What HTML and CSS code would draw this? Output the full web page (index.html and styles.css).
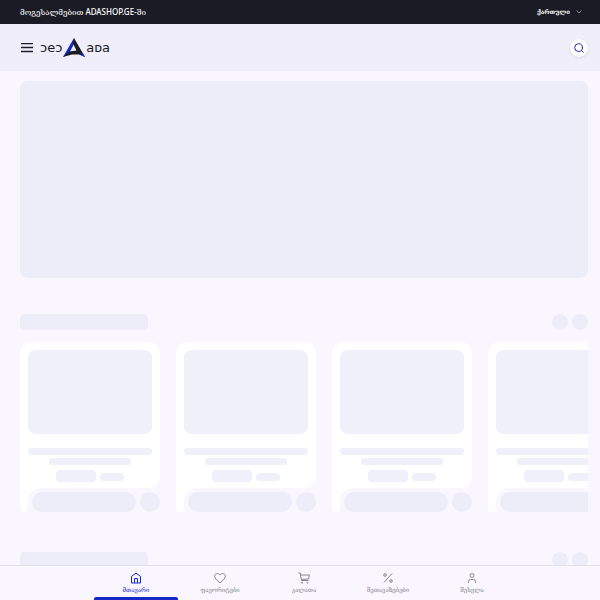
FILE: index.html
```html
<!DOCTYPE html>
<html lang="ka">

<head>
    <meta charset="UTF-8">
    <meta name="viewport" content="width=device-width, initial-scale=1">
    <title>ADASHOP.GE</title>
    <link rel="stylesheet" href="styles.css">
</head>

<body>
    <div class="topbar">
        <p class="welcome">მოგესალმებით ADASHOP.GE-ში</p>
        <button class="language" type="button">
            ქართული
            <svg width="6" height="4" viewBox="0 0 6 4" fill="none" stroke="#8d8d96"><path d="M0.5 0.5 3 3 5.5 0.5"/></svg>
        </button>
    </div>

    <header class="header">
        <button class="menu-btn" type="button" aria-label="მენიუ">
            <svg width="14" height="10" viewBox="0 0 14 10" stroke="#1b1b25" stroke-width="1.4"><path d="M1 .5h12M1 4.500h12M1 8.500h12"/></svg>
        </button>
        <a class="logo" href="#">
            <span>ɔeɔ</span>
            <svg width="22" height="19" viewBox="0 0 22 19">
                <path fill="#1428c8" d="M11 0 0 19 5.500 16.500 12 4z"/>
                <path fill="#1b1b25" d="M11 0 22 19 16 16.500 9 16.500 0 19 6.500 13.500 13.500 12.500 10 5.500z"/>
                <path fill="#1428c8" d="M16 16 22 19 20 15.500z"/>
            </svg>
            <span>aᴅa</span>
        </a>
        <button class="search-btn" type="button" aria-label="ძებნა">
            <svg width="10" height="10" viewBox="0 0 10 10" fill="none" stroke="#1c2bb8" stroke-linecap="round"><circle cx="4.600" cy="4.600" r="3.900"/><path d="m7.500 7.500 1.800 1.800"/></svg>
        </button>
    </header>

    <main class="content">
        <div class="banner"></div>

        <section class="products">
            <div class="section-head">
                <div class="section-title"></div>
                <div class="round"></div>
                <div class="round"></div>
            </div>
            <div class="slider">
                <div class="card">
                    <div class="card-body">
                        <div class="photo"></div>
                        <div class="line"></div>
                        <div class="line short"></div>
                        <div class="prices"><div class="price"></div><div class="old-price"></div></div>
                    </div>
                    <div class="card-foot"><div class="actions"><div class="buy"></div><div class="like"></div></div></div>
                </div>
                <div class="card">
                    <div class="card-body">
                        <div class="photo"></div>
                        <div class="line"></div>
                        <div class="line short"></div>
                        <div class="prices"><div class="price"></div><div class="old-price"></div></div>
                    </div>
                    <div class="card-foot"><div class="actions"><div class="buy"></div><div class="like"></div></div></div>
                </div>
                <div class="card">
                    <div class="card-body">
                        <div class="photo"></div>
                        <div class="line"></div>
                        <div class="line short"></div>
                        <div class="prices"><div class="price"></div><div class="old-price"></div></div>
                    </div>
                    <div class="card-foot"><div class="actions"><div class="buy"></div><div class="like"></div></div></div>
                </div>
                <div class="card">
                    <div class="card-body">
                        <div class="photo"></div>
                        <div class="line"></div>
                        <div class="line short"></div>
                        <div class="prices"><div class="price"></div><div class="old-price"></div></div>
                    </div>
                    <div class="card-foot"><div class="actions"><div class="buy"></div><div class="like"></div></div></div>
                </div>
            </div>
        </section>

        <section class="products">
            <div class="section-head">
                <div class="section-title"></div>
                <div class="round"></div>
                <div class="round"></div>
            </div>
        </section>
    </main>

    <nav class="bottom-nav">
        <a class="nav-item active" href="#">
            <svg width="12" height="12" viewBox="0 0 12 12"><path d="M1.500 4.500 6 1l4.500 3.500V11h-9zM4.500 11V6.500h3V11"/></svg>
            მთავარი
        </a>
        <a class="nav-item" href="#">
            <svg width="12" height="12" viewBox="0 0 12 12"><path d="M6 10.800C3 8.500.700 6.500.700 4.200.700 1.400 4.300.600 6 3c1.700-2.400 5.300-1.600 5.300 1.200C11.300 6.500 9 8.500 6 10.800z"/></svg>
            ფავორიტები
        </a>
        <a class="nav-item" href="#">
            <svg width="12" height="12" viewBox="0 0 12 12"><path d="M.500 1h1.700l1.300 7.500h7M2.500 3h9l-1 4-7.200.500"/><circle cx="4" cy="10.800" r=".5"/><circle cx="9.500" cy="10.800" r=".5"/></svg>
            კალათა
        </a>
        <a class="nav-item" href="#">
            <svg width="12" height="12" viewBox="0 0 12 12"><path d="m2 10.500 8-9"/><circle cx="3" cy="3" r="1.300"/><circle cx="9" cy="9" r="1.300"/></svg>
            შეთავაზებები
        </a>
        <a class="nav-item" href="#">
            <svg width="12" height="12" viewBox="0 0 12 12"><circle cx="6" cy="3.500" r="2"/><path d="M2.500 11V9.500a2 2 0 0 1 2-2h3a2 2 0 0 1 2 2V11"/></svg>
            შესვლა
        </a>
    </nav>
</body>

</html>
```
FILE: styles.css
```css
* {
    box-sizing: border-box;
}

body {
    margin: 0;
    height: 100vh;
    display: flex;
    flex-direction: column;
    overflow: hidden;
    background: #f9f6ff;
    color: #1b1b25;
    font-family: "Noto Sans", "DejaVu Serif", serif;
}

button {
    border: 0;
    padding: 0;
    background: none;
    font-family: inherit;
    cursor: pointer;
}

a {
    color: inherit;
    text-decoration: none;
}

svg {
    display: block;
}

.topbar,
.header {
    display: flex;
    align-items: center;
    justify-content: space-between;
    flex-shrink: 0;
    padding: 0 12px 0 20px;
}

.topbar {
    height: 24px;
    background: #1b1b25;
    color: #fff;
}

.welcome {
    margin: 0;
    font-size: 8px;
    font-weight: 500;
    line-height: 12px;
}

.language {
    display: flex;
    align-items: center;
    gap: 6px;
    padding-right: 6px;
    color: #fff;
    font-size: 6px;
    font-weight: 700;
    line-height: 12px;
}

.header {
    height: 47px;
    background: #f0eefb;
}

.menu-btn {
    margin-right: 6px;
}

.logo {
    display: flex;
    align-items: center;
    gap: 1px;
    margin-right: auto;
    font-family: "DejaVu Sans", sans-serif;
    font-size: 13px;
    line-height: 18px;
}

.search-btn {
    display: flex;
    align-items: center;
    justify-content: center;
    width: 18px;
    height: 18px;
    border-radius: 50%;
    background: #fff;
    box-shadow: 0 1px 3px rgba(0, 0, 0, 0.1);
}

.content {
    flex: 1;
    min-height: 0;
    overflow: hidden;
    padding: 10px 12px 0 20px;
}

.banner {
    height: 197px;
    margin-bottom: 36px;
    border-radius: 8px;
    background: #ecedf8;
}

.products {
    margin-bottom: 40px;
}

.section-head {
    display: flex;
    gap: 4px;
    margin-bottom: 12px;
}

.section-title {
    width: 128px;
    height: 16px;
    margin-right: auto;
    border-radius: 4px;
    background: #ecedf8;
}

.round {
    width: 16px;
    height: 16px;
    border-radius: 50%;
    background: #ecedf8;
}

.slider {
    display: flex;
    gap: 16px;
    overflow: hidden;
}

.card {
    flex: 0 0 140px;
}

.card-body {
    display: flex;
    flex-direction: column;
    align-items: center;
    padding: 8px 8px 6px;
    border-radius: 12px 12px 12px 0;
    background: #fff;
}

.photo {
    width: 100%;
    height: 84px;
    margin-bottom: 14px;
    border-radius: 8px;
    background: #eff0f9;
}

.line {
    width: 100%;
    height: 7px;
    margin-bottom: 3px;
    border-radius: 4px;
    background: #eff0f9;
}

.short {
    width: 82px;
}

.prices {
    display: flex;
    align-items: center;
    gap: 4px;
    padding-top: 2px;
}

.price {
    width: 40px;
    height: 12px;
    border-radius: 4px;
    background: #eff0f9;
}

.old-price {
    width: 24px;
    height: 8px;
    margin-top: 2px;
    border-radius: 4px;
    background: #eff0f9;
}

.card-foot {
    display: flex;
}

/* white tail under the card body */
.card-foot::before {
    content: "";
    width: 8px;
    border-radius: 0 0 4px 4px;
    background: #fff;
}

/* the gradient draws the rounded inner corner of the cut-out */
.actions {
    display: flex;
    flex: 1;
    gap: 4px;
    padding: 4px 0 0 4px;
    background: radial-gradient(circle at 12px 12px, #f9f6ff 11px, #fff 12px) 0 0 / 12px 12px no-repeat;
}

.buy {
    flex: 1;
    height: 20px;
    border-radius: 10px;
    background: #ecedf8;
}

.like {
    width: 20px;
    height: 20px;
    border-radius: 50%;
    background: #ecedf8;
}

.bottom-nav {
    display: flex;
    justify-content: center;
    flex-shrink: 0;
    height: 35px;
    padding: 0 12px 0 20px;
    border-top: 1px solid #e1e0e6;
    background: #f9f6ff;
}

.nav-item {
    display: flex;
    flex-direction: column;
    align-items: center;
    flex: 0 1 84px;
    padding-top: 6px;
    border-bottom: 3px solid transparent;
    color: #85858d;
    font-size: 6px;
    line-height: 12px;
    white-space: nowrap;
}

.nav-item svg {
    fill: none;
    stroke: currentColor;
}

.active {
    position: relative;
    color: #1428c8;
}

.active::after {
    content: "";
    position: absolute;
    left: 0;
    right: 0;
    bottom: -3px;
    height: 3px;
    border-radius: 2px 2px 0 0;
    background: #1428c8;
}
```
